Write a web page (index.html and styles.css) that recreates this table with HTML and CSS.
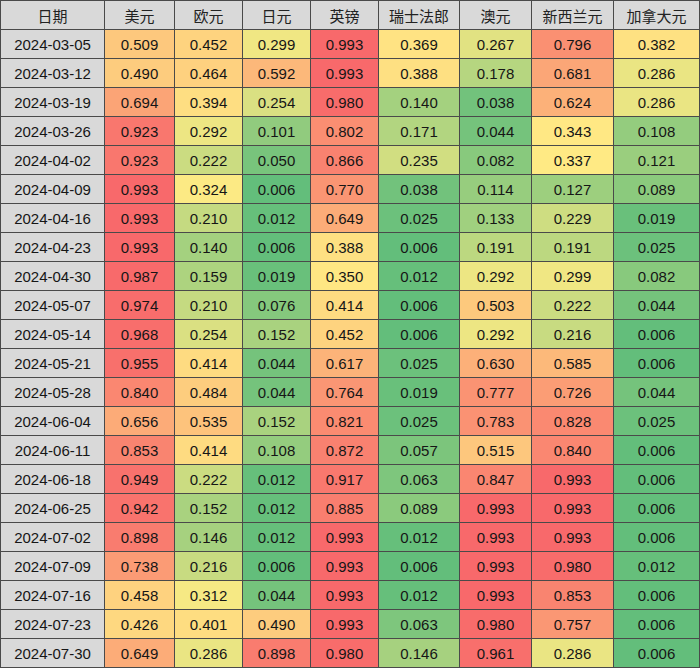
FILE: index.html
```html
<!DOCTYPE html>
<html lang="zh-CN">
<head>
<meta charset="utf-8">
<title>汇率分位</title>
<link rel="stylesheet" href="styles.css">
</head>
<body>
<div class="sheet">
<div class="hd">日期</div><div class="hd">美元</div><div class="hd">欧元</div><div class="hd">日元</div><div class="hd">英镑</div><div class="hd">瑞士法郎</div><div class="hd">澳元</div><div class="hd">新西兰元</div><div class="hd">加拿大元</div>
<div class="date">2024-03-05</div><div class="v">0.509</div><div class="v">0.452</div><div class="v">0.299</div><div class="v">0.993</div><div class="v">0.369</div><div class="v">0.267</div><div class="v">0.796</div><div class="v">0.382</div>
<div class="date">2024-03-12</div><div class="v">0.490</div><div class="v">0.464</div><div class="v">0.592</div><div class="v">0.993</div><div class="v">0.388</div><div class="v">0.178</div><div class="v">0.681</div><div class="v">0.286</div>
<div class="date">2024-03-19</div><div class="v">0.694</div><div class="v">0.394</div><div class="v">0.254</div><div class="v">0.980</div><div class="v">0.140</div><div class="v">0.038</div><div class="v">0.624</div><div class="v">0.286</div>
<div class="date">2024-03-26</div><div class="v">0.923</div><div class="v">0.292</div><div class="v">0.101</div><div class="v">0.802</div><div class="v">0.171</div><div class="v">0.044</div><div class="v">0.343</div><div class="v">0.108</div>
<div class="date">2024-04-02</div><div class="v">0.923</div><div class="v">0.222</div><div class="v">0.050</div><div class="v">0.866</div><div class="v">0.235</div><div class="v">0.082</div><div class="v">0.337</div><div class="v">0.121</div>
<div class="date">2024-04-09</div><div class="v">0.993</div><div class="v">0.324</div><div class="v">0.006</div><div class="v">0.770</div><div class="v">0.038</div><div class="v">0.114</div><div class="v">0.127</div><div class="v">0.089</div>
<div class="date">2024-04-16</div><div class="v">0.993</div><div class="v">0.210</div><div class="v">0.012</div><div class="v">0.649</div><div class="v">0.025</div><div class="v">0.133</div><div class="v">0.229</div><div class="v">0.019</div>
<div class="date">2024-04-23</div><div class="v">0.993</div><div class="v">0.140</div><div class="v">0.006</div><div class="v">0.388</div><div class="v">0.006</div><div class="v">0.191</div><div class="v">0.191</div><div class="v">0.025</div>
<div class="date">2024-04-30</div><div class="v">0.987</div><div class="v">0.159</div><div class="v">0.019</div><div class="v">0.350</div><div class="v">0.012</div><div class="v">0.292</div><div class="v">0.299</div><div class="v">0.082</div>
<div class="date">2024-05-07</div><div class="v">0.974</div><div class="v">0.210</div><div class="v">0.076</div><div class="v">0.414</div><div class="v">0.006</div><div class="v">0.503</div><div class="v">0.222</div><div class="v">0.044</div>
<div class="date">2024-05-14</div><div class="v">0.968</div><div class="v">0.254</div><div class="v">0.152</div><div class="v">0.452</div><div class="v">0.006</div><div class="v">0.292</div><div class="v">0.216</div><div class="v">0.006</div>
<div class="date">2024-05-21</div><div class="v">0.955</div><div class="v">0.414</div><div class="v">0.044</div><div class="v">0.617</div><div class="v">0.025</div><div class="v">0.630</div><div class="v">0.585</div><div class="v">0.006</div>
<div class="date">2024-05-28</div><div class="v">0.840</div><div class="v">0.484</div><div class="v">0.044</div><div class="v">0.764</div><div class="v">0.019</div><div class="v">0.777</div><div class="v">0.726</div><div class="v">0.044</div>
<div class="date">2024-06-04</div><div class="v">0.656</div><div class="v">0.535</div><div class="v">0.152</div><div class="v">0.821</div><div class="v">0.025</div><div class="v">0.783</div><div class="v">0.828</div><div class="v">0.025</div>
<div class="date">2024-06-11</div><div class="v">0.853</div><div class="v">0.414</div><div class="v">0.108</div><div class="v">0.872</div><div class="v">0.057</div><div class="v">0.515</div><div class="v">0.840</div><div class="v">0.006</div>
<div class="date">2024-06-18</div><div class="v">0.949</div><div class="v">0.222</div><div class="v">0.012</div><div class="v">0.917</div><div class="v">0.063</div><div class="v">0.847</div><div class="v">0.993</div><div class="v">0.006</div>
<div class="date">2024-06-25</div><div class="v">0.942</div><div class="v">0.152</div><div class="v">0.012</div><div class="v">0.885</div><div class="v">0.089</div><div class="v">0.993</div><div class="v">0.993</div><div class="v">0.006</div>
<div class="date">2024-07-02</div><div class="v">0.898</div><div class="v">0.146</div><div class="v">0.012</div><div class="v">0.993</div><div class="v">0.012</div><div class="v">0.993</div><div class="v">0.993</div><div class="v">0.006</div>
<div class="date">2024-07-09</div><div class="v">0.738</div><div class="v">0.216</div><div class="v">0.006</div><div class="v">0.993</div><div class="v">0.006</div><div class="v">0.993</div><div class="v">0.980</div><div class="v">0.012</div>
<div class="date">2024-07-16</div><div class="v">0.458</div><div class="v">0.312</div><div class="v">0.044</div><div class="v">0.993</div><div class="v">0.012</div><div class="v">0.993</div><div class="v">0.853</div><div class="v">0.006</div>
<div class="date">2024-07-23</div><div class="v">0.426</div><div class="v">0.401</div><div class="v">0.490</div><div class="v">0.993</div><div class="v">0.063</div><div class="v">0.980</div><div class="v">0.757</div><div class="v">0.006</div>
<div class="date">2024-07-30</div><div class="v">0.649</div><div class="v">0.286</div><div class="v">0.898</div><div class="v">0.980</div><div class="v">0.146</div><div class="v">0.961</div><div class="v">0.286</div><div class="v">0.006</div>
</div>
<script src="script.js"></script>
</body>
</html>
```
FILE: styles.css
```css
html, body {
  margin: 0;
  padding: 0;
  background: #ffffff;
}

.sheet {
  display: grid;
  grid-template-columns: 103px 69px 67px 67px 67px 80px 71px 81px 85px;
  grid-auto-rows: 28px;
  gap: 1px;
  padding: 1px;
  width: 700px;
  box-sizing: border-box;
  background: #4a4a4a;
  font-family: "Liberation Sans", "Noto Sans CJK SC", sans-serif;
  font-size: 15px;
  color: #161616;
}

.hd,
.date,
.v {
  display: flex;
  align-items: center;
  justify-content: center;
  white-space: nowrap;
}

.hd {
  background: #d9d9d9;
  color: #222222;
}

.date {
  background: #d9d9d9;
}

.v {
  background: #ffeb84;
}
```
FILE: script.js
```js
(function () {
  var MIN = 0.006, MID = 0.33, MAX = 0.993;
  var green = [99, 190, 123], yellow = [255, 235, 132], red = [248, 105, 107];
  function mix(a, b, t) {
    return [0, 1, 2].map(function (i) { return Math.round(a[i] + (b[i] - a[i]) * t); });
  }
  var cells = document.querySelectorAll('.v');
  for (var i = 0; i < cells.length; i++) {
    var v = parseFloat(cells[i].textContent);
    var c;
    if (v <= MID) {
      c = mix(green, yellow, Math.max(0, (v - MIN) / (MID - MIN)));
    } else {
      c = mix(yellow, red, Math.min(1, (v - MID) / (MAX - MID)));
    }
    cells[i].style.backgroundColor = 'rgb(' + c.join(',') + ')';
  }
})();
```
